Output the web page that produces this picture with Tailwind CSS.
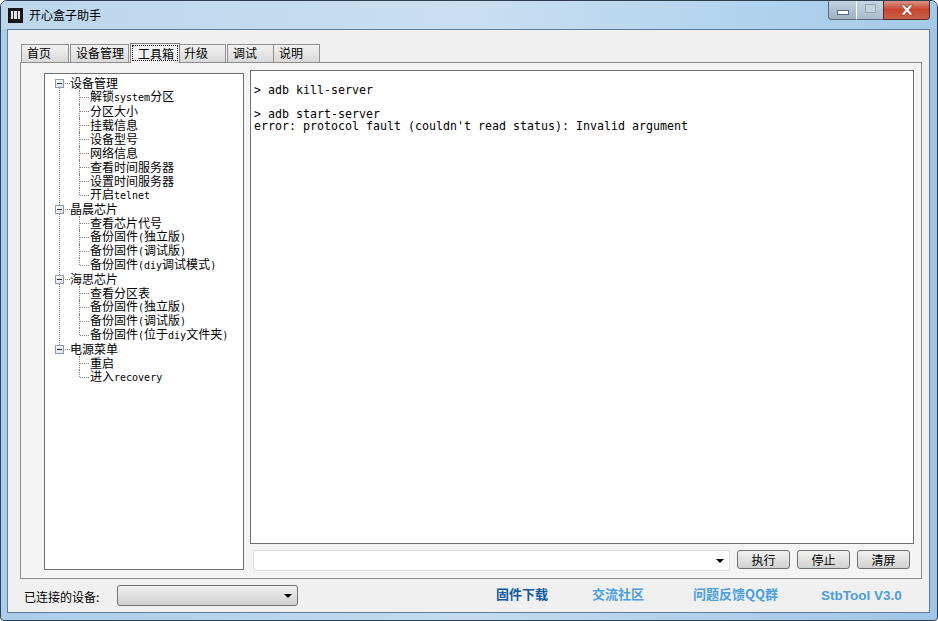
<!DOCTYPE html>
<html lang="zh">
<head>
<meta charset="utf-8">
<title>开心盒子助手</title>
<script src="https://cdn.jsdelivr.net/npm/@tailwindcss/browser@4"></script>
</head>
<body class="bg-white">
<div class="w-[938px] h-[621px] overflow-hidden flex flex-col rounded-t-[7px] rounded-b-[4px] border border-[#2f3f52] bg-gradient-to-r from-[#a9cdea] via-[#c4dbef] to-[#9fc6e8] font-['Noto_Sans_CJK_SC',sans-serif] text-black">
  <!-- caption -->
  <div class="h-[28px] shrink-0 flex items-start bg-gradient-to-r from-[#bcd6ec] via-[#c9dff1] to-[#a3caea]">
    <svg class="ml-[7px] mt-[7px] shrink-0" width="15" height="15" viewBox="0 0 15 15"><rect width="15" height="15" fill="#151515"/><rect x="3" y="3" width="9" height="8" fill="#e8e8e8"/><rect x="5" y="3" width="1" height="8" fill="#333"/><rect x="9" y="3" width="1" height="8" fill="#333"/></svg>
    <span class="ml-[6px] mt-[5px] text-[12px] leading-[17px] whitespace-nowrap">开心盒子助手</span>
    <div class="ml-auto mr-[7px] flex h-[20px] -mt-px">
      <div class="w-[28px] flex items-end justify-center pb-[4px] rounded-bl-[4px] border border-t-0 border-r-0 border-[#5a6a7c] bg-gradient-to-b from-[#c2d3e2] to-[#9fb2c4]">
        <div class="w-[12px] h-[5px] bg-white border border-[#55677a]"></div>
      </div>
      <div class="w-[27px] flex items-center justify-center border-b border-l border-[#5a6a7c] border-l-white bg-gradient-to-b from-[#c6d6e4] to-[#a9bccd]">
        <div class="w-[11px] h-[9px] border border-[#93a5b6] bg-[#c5d3df] mb-[2px]"></div>
      </div>
      <div class="w-[47px] flex items-center justify-center rounded-br-[4px] border border-t-0 border-[#5a2a24] bg-gradient-to-b from-[#d99a8e] via-[#c8442f] to-[#c9614c]">
        <svg width="14" height="12" viewBox="0 0 14 12"><path d="M1 1 L4.5 1 L7 4 L9.5 1 L13 1 L9 6 L13 11 L9.5 11 L7 8 L4.5 11 L1 11 L5 6 Z" fill="#f4f4f4" stroke="#7d3a2e" stroke-width="0.6"/></svg>
      </div>
    </div>
  </div>

  <!-- client area -->
  <div class="ml-[6px] w-[923px] h-[584px] shrink-0 border border-[#5f7b96] bg-[#f0f0f0] flex flex-col">
    <!-- tabs -->
    <div class="h-[32px] shrink-0 pl-[13px] flex items-end text-[12px] leading-[15px]">
      <div class="w-[48px] h-[18px] mr-px pl-[5px] border border-b-0 border-[#909090] bg-gradient-to-b from-[#f2f2f2] to-[#d9d9d9]">首页</div>
      <div class="w-[59px] h-[18px] mr-px pl-[5px] border border-b-0 border-[#909090] bg-gradient-to-b from-[#f2f2f2] to-[#d9d9d9] whitespace-nowrap">设备管理</div>
      <div class="w-[50px] h-[20px] -mb-px relative pl-[1px] pt-[1px] border border-b-0 border-[#808080] bg-[#f4f4f4]">
        <span class="block w-[46px] h-[16px] pl-[5px] border border-dotted border-black whitespace-nowrap">工具箱</span>
      </div>
      <div class="w-[46px] h-[18px] mr-px pl-[4px] border border-b-0 border-l-0 border-[#909090] bg-gradient-to-b from-[#f2f2f2] to-[#d9d9d9]">升级</div>
      <div class="w-[47px] h-[18px] pl-[5px] border border-b-0 border-[#909090] bg-gradient-to-b from-[#f2f2f2] to-[#d9d9d9]">调试</div>
      <div class="w-[46px] h-[18px] pl-[5px] border border-b-0 border-l-0 border-[#909090] bg-gradient-to-b from-[#f2f2f2] to-[#d9d9d9]">说明</div>
    </div>

    <!-- pane -->
    <div class="ml-[12px] w-[902px] h-[517px] shrink-0 border border-[#8c8c8c] bg-[#f4f4f4] flex items-start">
      <!-- tree -->
      <div class="relative ml-[23px] mt-[10px] w-[200px] h-[497px] shrink-0 border border-[#707070] bg-white pt-[2px] text-[12px] leading-[14px]">
        <span class="absolute left-[14px] top-[9px] h-[266px] border-l border-dotted border-[#808080]"></span>

        <div class="relative flex items-center h-[14px] pl-[10px]"><span class="w-[9px] h-[9px] border border-[#8a9aa8] bg-gradient-to-br from-white to-[#d8dde2] flex items-center justify-center shrink-0"><span class="w-[5px] h-px bg-[#333]"></span></span><span class="w-[5px] ml-px border-t border-dotted border-[#808080]"></span><span class="whitespace-nowrap">设备管理</span></div>
        <div class="flex items-center h-[14px] pl-[34px]"><span class="self-stretch border-l border-dotted border-[#808080]"></span><span class="w-[9px] mr-[1px] border-t border-dotted border-[#808080]"></span><span class="whitespace-nowrap">解锁<span class="font-['DejaVu_Sans_Mono'] text-[10px]">system</span>分区</span></div>
        <div class="flex items-center h-[14px] pl-[34px]"><span class="self-stretch border-l border-dotted border-[#808080]"></span><span class="w-[9px] mr-[1px] border-t border-dotted border-[#808080]"></span><span class="whitespace-nowrap">分区大小</span></div>
        <div class="flex items-center h-[14px] pl-[34px]"><span class="self-stretch border-l border-dotted border-[#808080]"></span><span class="w-[9px] mr-[1px] border-t border-dotted border-[#808080]"></span><span class="whitespace-nowrap">挂载信息</span></div>
        <div class="flex items-center h-[14px] pl-[34px]"><span class="self-stretch border-l border-dotted border-[#808080]"></span><span class="w-[9px] mr-[1px] border-t border-dotted border-[#808080]"></span><span class="whitespace-nowrap">设备型号</span></div>
        <div class="flex items-center h-[14px] pl-[34px]"><span class="self-stretch border-l border-dotted border-[#808080]"></span><span class="w-[9px] mr-[1px] border-t border-dotted border-[#808080]"></span><span class="whitespace-nowrap">网络信息</span></div>
        <div class="flex items-center h-[14px] pl-[34px]"><span class="self-stretch border-l border-dotted border-[#808080]"></span><span class="w-[9px] mr-[1px] border-t border-dotted border-[#808080]"></span><span class="whitespace-nowrap">查看时间服务器</span></div>
        <div class="flex items-center h-[14px] pl-[34px]"><span class="self-stretch border-l border-dotted border-[#808080]"></span><span class="w-[9px] mr-[1px] border-t border-dotted border-[#808080]"></span><span class="whitespace-nowrap">设置时间服务器</span></div>
        <div class="flex items-center h-[14px] pl-[34px]"><span class="h-[7px] self-start border-l border-dotted border-[#808080]"></span><span class="w-[9px] mr-[1px] border-t border-dotted border-[#808080]"></span><span class="whitespace-nowrap">开启<span class="font-['DejaVu_Sans_Mono'] text-[10px]">telnet</span></span></div>

        <div class="relative flex items-center h-[14px] pl-[10px]"><span class="w-[9px] h-[9px] border border-[#8a9aa8] bg-gradient-to-br from-white to-[#d8dde2] flex items-center justify-center shrink-0"><span class="w-[5px] h-px bg-[#333]"></span></span><span class="w-[5px] ml-px border-t border-dotted border-[#808080]"></span><span class="whitespace-nowrap">晶晨芯片</span></div>
        <div class="flex items-center h-[14px] pl-[34px]"><span class="self-stretch border-l border-dotted border-[#808080]"></span><span class="w-[9px] mr-[1px] border-t border-dotted border-[#808080]"></span><span class="whitespace-nowrap">查看芯片代号</span></div>
        <div class="flex items-center h-[14px] pl-[34px]"><span class="self-stretch border-l border-dotted border-[#808080]"></span><span class="w-[9px] mr-[1px] border-t border-dotted border-[#808080]"></span><span class="whitespace-nowrap">备份固件<span class="font-['DejaVu_Sans_Mono'] text-[10px]">(</span>独立版<span class="font-['DejaVu_Sans_Mono'] text-[10px]">)</span></span></div>
        <div class="flex items-center h-[14px] pl-[34px]"><span class="self-stretch border-l border-dotted border-[#808080]"></span><span class="w-[9px] mr-[1px] border-t border-dotted border-[#808080]"></span><span class="whitespace-nowrap">备份固件<span class="font-['DejaVu_Sans_Mono'] text-[10px]">(</span>调试版<span class="font-['DejaVu_Sans_Mono'] text-[10px]">)</span></span></div>
        <div class="flex items-center h-[14px] pl-[34px]"><span class="h-[7px] self-start border-l border-dotted border-[#808080]"></span><span class="w-[9px] mr-[1px] border-t border-dotted border-[#808080]"></span><span class="whitespace-nowrap">备份固件<span class="font-['DejaVu_Sans_Mono'] text-[10px]">(diy</span>调试模式<span class="font-['DejaVu_Sans_Mono'] text-[10px]">)</span></span></div>

        <div class="relative flex items-center h-[14px] pl-[10px]"><span class="w-[9px] h-[9px] border border-[#8a9aa8] bg-gradient-to-br from-white to-[#d8dde2] flex items-center justify-center shrink-0"><span class="w-[5px] h-px bg-[#333]"></span></span><span class="w-[5px] ml-px border-t border-dotted border-[#808080]"></span><span class="whitespace-nowrap">海思芯片</span></div>
        <div class="flex items-center h-[14px] pl-[34px]"><span class="self-stretch border-l border-dotted border-[#808080]"></span><span class="w-[9px] mr-[1px] border-t border-dotted border-[#808080]"></span><span class="whitespace-nowrap">查看分区表</span></div>
        <div class="flex items-center h-[14px] pl-[34px]"><span class="self-stretch border-l border-dotted border-[#808080]"></span><span class="w-[9px] mr-[1px] border-t border-dotted border-[#808080]"></span><span class="whitespace-nowrap">备份固件<span class="font-['DejaVu_Sans_Mono'] text-[10px]">(</span>独立版<span class="font-['DejaVu_Sans_Mono'] text-[10px]">)</span></span></div>
        <div class="flex items-center h-[14px] pl-[34px]"><span class="self-stretch border-l border-dotted border-[#808080]"></span><span class="w-[9px] mr-[1px] border-t border-dotted border-[#808080]"></span><span class="whitespace-nowrap">备份固件<span class="font-['DejaVu_Sans_Mono'] text-[10px]">(</span>调试版<span class="font-['DejaVu_Sans_Mono'] text-[10px]">)</span></span></div>
        <div class="flex items-center h-[14px] pl-[34px]"><span class="h-[7px] self-start border-l border-dotted border-[#808080]"></span><span class="w-[9px] mr-[1px] border-t border-dotted border-[#808080]"></span><span class="whitespace-nowrap">备份固件<span class="font-['DejaVu_Sans_Mono'] text-[10px]">(</span>位于<span class="font-['DejaVu_Sans_Mono'] text-[10px]">diy</span>文件夹<span class="font-['DejaVu_Sans_Mono'] text-[10px]">)</span></span></div>

        <div class="relative flex items-center h-[14px] pl-[10px]"><span class="w-[9px] h-[9px] border border-[#8a9aa8] bg-gradient-to-br from-white to-[#d8dde2] flex items-center justify-center shrink-0"><span class="w-[5px] h-px bg-[#333]"></span></span><span class="w-[5px] ml-px border-t border-dotted border-[#808080]"></span><span class="whitespace-nowrap">电源菜单</span></div>
        <div class="flex items-center h-[14px] pl-[34px]"><span class="self-stretch border-l border-dotted border-[#808080]"></span><span class="w-[9px] mr-[1px] border-t border-dotted border-[#808080]"></span><span class="whitespace-nowrap">重启</span></div>
        <div class="flex items-center h-[14px] pl-[34px]"><span class="h-[7px] self-start border-l border-dotted border-[#808080]"></span><span class="w-[9px] mr-[1px] border-t border-dotted border-[#808080]"></span><span class="whitespace-nowrap">进入<span class="font-['DejaVu_Sans_Mono'] text-[10px]">recovery</span></span></div>
      </div>

      <!-- right column -->
      <div class="ml-[6px] mt-[7px] flex flex-col w-[664px]">
        <div class="h-[474px] border border-[#707070] bg-white pl-[3px] pt-[13px] font-['DejaVu_Sans_Mono',monospace] text-[11.63px] leading-[12px] whitespace-nowrap">
          <div>&gt; adb kill-server</div>
          <div class="h-[12px]"></div>
          <div>&gt; adb start-server</div>
          <div>error: protocol fault (couldn't read status): Invalid argument</div>
        </div>
        <div class="mt-[6px] flex items-start">
          <div class="ml-[3px] w-[477px] h-[21px] rounded-[2px] border border-[#dcdcdc] bg-white flex items-center justify-end pr-[5px]">
            <span class="w-0 h-0 border-x-[4px] border-x-transparent border-t-[4px] border-t-black"></span>
          </div>
          <div class="ml-[7px] w-[53px] h-[19px] rounded-[3px] border border-[#707070] bg-gradient-to-b from-[#f2f2f2] to-[#d0d0d0] text-[12px] leading-[17px] text-center">执行</div>
          <div class="ml-[7px] w-[53px] h-[19px] rounded-[3px] border border-[#707070] bg-gradient-to-b from-[#f2f2f2] to-[#d0d0d0] text-[12px] leading-[17px] text-center">停止</div>
          <div class="ml-[7px] w-[53px] h-[19px] rounded-[3px] border border-[#707070] bg-gradient-to-b from-[#f2f2f2] to-[#d0d0d0] text-[12px] leading-[17px] text-center">清屏</div>
        </div>
      </div>
    </div>

    <!-- status row -->
    <div class="flex-1 flex items-center text-[12px] whitespace-nowrap">
      <span class="ml-[16px] w-[93px] mt-[2px]">已连接的设备:</span>
      <div class="w-[181px] h-[21px] rounded-[3px] border border-[#707070] bg-gradient-to-b from-[#f0f0f0] to-[#cfcfcf] flex items-center justify-end pr-[5px]">
        <span class="w-0 h-0 border-x-[4px] border-x-transparent border-t-[4px] border-t-black"></span>
      </div>
      <span class="ml-[198px] w-[96px] font-bold text-[13px] text-[#0f5b9e] -mt-[3px]">固件下载</span>
      <span class="w-[101px] font-bold text-[13px] text-[#4a9ee0] -mt-[3px]">交流社区</span>
      <span class="w-[128px] font-bold text-[13px] text-[#4a9ee0] -mt-[3px]">问题反馈QQ群</span>
      <span class="font-['Liberation_Sans'] font-bold text-[13.5px] text-[#4a9ee0] mt-[1px]">StbTool V3.0</span>
    </div>
  </div>
</div>
</body>
</html>
